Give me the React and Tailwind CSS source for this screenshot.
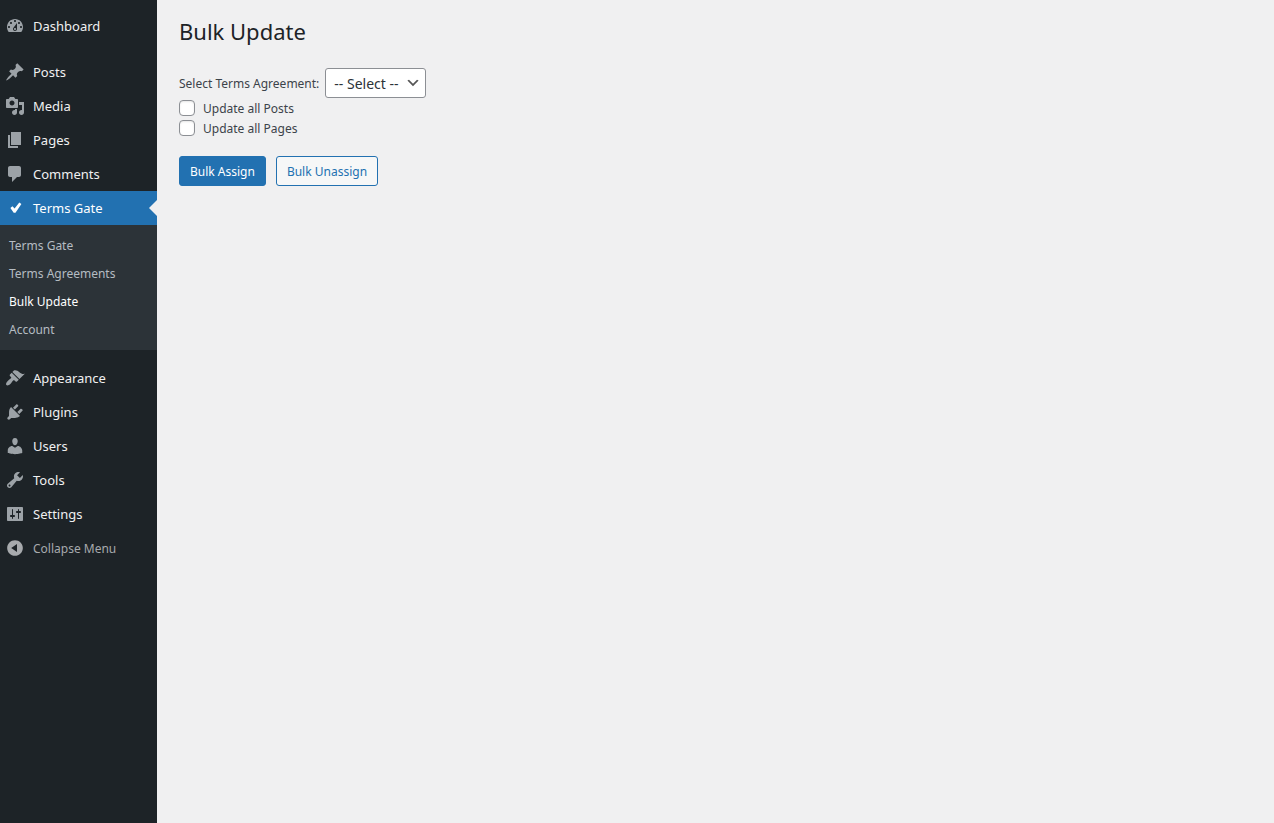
const icons = {
  dashboard:
    'M3.76 16h12.48c1.1-1.37 1.76-3.11 1.76-5 0-4.42-3.58-8-8-8s-8 3.58-8 8c0 1.89.66 3.63 1.76 5zM10 4c.55 0 1 .45 1 1s-.45 1-1 1-1-.45-1-1 .45-1 1-1zM6 6c.55 0 1 .45 1 1s-.45 1-1 1-1-.45-1-1 .45-1 1-1zm8 0c.55 0 1 .45 1 1s-.45 1-1 1-1-.45-1-1 .45-1 1-1zm-5.37 5.55L12 7v6c0 1.1-.9 2-2 2s-2-.9-2-2c0-.57.24-1.08.63-1.45zM4 10c.55 0 1 .45 1 1s-.45 1-1 1-1-.45-1-1 .45-1 1-1zm12 0c.55 0 1 .45 1 1s-.45 1-1 1-1-.45-1-1 .45-1 1-1zm-5 3c0-.55-.45-1-1-1s-1 .45-1 1 .45 1 1 1 1-.45 1-1z',
  posts:
    'M10.44 3.02l1.82-1.82 6.36 6.35-1.83 1.82c-1.05-.68-2.48-.57-3.41.36l-.75.75c-.92.93-1.04 2.35-.35 3.41l-1.83 1.82-2.41-2.41-2.8 2.79c-.42.42-3.38 2.71-3.8 2.29s1.86-3.39 2.28-3.81l2.79-2.79L4.1 9.36l1.83-1.82c1.05.69 2.48.57 3.4-.36l.75-.75c.93-.92 1.05-2.35.36-3.41z',
  media:
    'M13 11V4c0-.55-.45-1-1-1h-1.67L9 1H5L3.67 3H2c-.55 0-1 .45-1 1v7c0 .55.45 1 1 1h10c.55 0 1-.45 1-1zM7 4.5c1.38 0 2.5 1.12 2.5 2.5S8.38 9.5 7 9.5 4.5 8.38 4.5 7 5.62 4.5 7 4.5zM14 6h5v10.5c0 1.38-1.12 2.5-2.5 2.5S14 17.88 14 16.5s1.12-2.5 2.5-2.5c.17 0 .34.02.5.05V9h-3V6zm-4 8.05V13h2v3.5c0 1.38-1.12 2.5-2.5 2.5S7 17.88 7 16.5 8.12 14 9.5 14c.17 0 .34.02.5.05z',
  pages: 'M6 15V2h10v13H6zm-1 1h8v2H3V5h2v11z',
  comments:
    'M5 2h9c1.1 0 2 .9 2 2v7c0 1.1-.9 2-2 2h-2l-5 5v-5H5c-1.1 0-2-.9-2-2V4c0-1.1.9-2 2-2z',
  check: 'M14.3 4.6l2.1 1.5-5.9 8.7H8.7L5.4 10l2-1.8 2.2 2.3z',
  appearance:
    'M14.48 11.06L7.41 3.99l1.5-1.5c.5-.56 2.3-.47 3.51.32 1.21.8 1.43 1.28 2.91 2.1 1.18.64 2.45 1.26 4.45.85zm-.71.71L6.7 4.7 4.93 6.47c-.39.39-.39 1.02 0 1.41l1.06 1.06c.39.39.39 1.03 0 1.42-.6.6-1.43 1.11-2.21 1.69-.35.26-.7.53-1.01.84C1.43 14.23.4 16.08 1.4 17.07c.99 1 2.84-.03 4.18-1.36.31-.31.58-.66.85-1.02.57-.78 1.08-1.61 1.69-2.21.39-.39 1.02-.39 1.41 0l1.06 1.06c.39.39 1.02.39 1.41 0z',
  plugins:
    'M13.11 4.36L9.87 7.6 8 5.73l3.24-3.24c.35-.34 1.05-.2 1.56.32.52.51.66 1.21.31 1.55zm-8 1.77l.91-1.12 9.01 9.01-1.19.84c-.71.71-2.63 1.16-3.82 1.16H6.14L4.9 17.26c-.59.59-1.54.59-2.12 0-.59-.58-.59-1.53 0-2.12l1.24-1.24v-3.88c0-1.13.4-3.19 1.09-3.89zm7.26 3.97l3.24-3.24c.34-.35 1.04-.21 1.55.31.52.51.66 1.21.31 1.55l-3.24 3.25z',
  users:
    'M10 9.25c-2.27 0-2.73-3.44-2.73-3.44C7 4.02 7.82 2 9.97 2c2.16 0 2.98 2.02 2.71 3.81 0 0-.41 3.44-2.68 3.44zm0 2.57L12.72 10c2.39 0 4.52 2.33 4.52 4.53v2.49s-3.65 1.13-7.24 1.13c-3.65 0-7.24-1.13-7.24-1.13v-2.49c0-2.25 1.94-4.48 4.47-4.48z',
  tools:
    'M16.68 9.77c-1.34 1.34-3.3 1.67-4.95.99l-5.41 6.52c-.99.99-2.59.99-3.58 0s-.99-2.59 0-3.57l6.52-5.42c-.68-1.65-.35-3.61.99-4.95 1.28-1.28 3.12-1.62 4.72-1.06l-2.89 2.89 2.82 2.82 2.86-2.87c.53 1.58.18 3.39-1.08 4.65zM3.81 16.21c.4.39 1.04.39 1.43 0 .4-.4.4-1.04 0-1.43-.39-.4-1.03-.4-1.43 0-.39.39-.39 1.03 0 1.43z',
  settings:
    'M18 16V4c0-.55-.45-1-1-1H3c-.55 0-1 .45-1 1v12c0 .55.45 1 1 1h14c.55 0 1-.45 1-1zM8 11h1c.55 0 1 .45 1 1s-.45 1-1 1H8v1.5c0 .28-.22.5-.5.5s-.5-.22-.5-.5V13H6c-.55 0-1-.45-1-1s.45-1 1-1h1V5.5c0-.28.22-.5.5-.5s.5.22.5.5V11zm5-2h-1c-.55 0-1-.45-1-1s.45-1 1-1h1V5.5c0-.28.22-.5.5-.5s.5.22.5.5V7h1c.55 0 1 .45 1 1s-.45 1-1 1h-1v5.5c0 .28-.22.5-.5.5s-.5-.22-.5-.5V9z',
  collapse:
    'M10 2.16c4.33 0 7.84 3.51 7.84 7.84s-3.51 7.84-7.84 7.84S2.16 14.33 2.16 10 5.71 2.16 10 2.16zm2 11.72V6.12L6.18 9.97z',
};

function Icon({ name }) {
  return (
    <svg viewBox="0 0 20 20" className="size-5 shrink-0" fill="currentColor" fillRule="evenodd" aria-hidden="true">
      <path d={icons[name]} />
    </svg>
  );
}

function MenuItem({ icon, label }) {
  return (
    <li>
      <a href="#" className="flex h-[34px] items-center gap-2 pl-[5px] text-[#9ca2a7]">
        <Icon name={icon} />
        <span className="pt-0.5 text-[#f0f0f1]">{label}</span>
      </a>
    </li>
  );
}

const submenu = ['Terms Gate', 'Terms Agreements', 'Bulk Update', 'Account'];

function Sidebar() {
  return (
    <nav aria-label="Main menu" className="w-[157px] shrink-0 bg-[#1d2327] pt-[9px] text-[13px]">
      <ul>
        <MenuItem icon="dashboard" label="Dashboard" />
      </ul>
      <ul className="mt-3">
        <MenuItem icon="posts" label="Posts" />
        <MenuItem icon="media" label="Media" />
        <MenuItem icon="pages" label="Pages" />
        <MenuItem icon="comments" label="Comments" />
        <li>
          <a href="#" className="relative flex h-[34px] items-center gap-2 bg-[#2271b1] pl-[5px] text-white">
            <Icon name="check" />
            <span className="pt-0.5">Terms Gate</span>
            <span className="absolute top-1/2 right-0 -translate-y-1/2 border-8 border-l-0 border-transparent border-r-[#f0f0f1]" />
          </a>
          <ul className="bg-[#2c3338] pt-[7px] pb-1.5 text-[12px]">
            {submenu.map((label) => (
              <li key={label}>
                <a
                  href="#"
                  className={
                    label === 'Bulk Update'
                      ? 'flex h-7 items-center pl-[9px] text-white'
                      : 'flex h-7 items-center pl-[9px] text-[#b5bcc2]'
                  }
                >
                  {label}
                </a>
              </li>
            ))}
          </ul>
        </li>
      </ul>
      <ul className="mt-[11px]">
        <MenuItem icon="appearance" label="Appearance" />
        <MenuItem icon="plugins" label="Plugins" />
        <MenuItem icon="users" label="Users" />
        <MenuItem icon="tools" label="Tools" />
        <MenuItem icon="settings" label="Settings" />
      </ul>
      <button type="button" className="flex h-[34px] w-full items-center gap-2 pl-[5px] text-[12px] text-[#a7aaad]">
        <Icon name="collapse" />
        <span className="pt-0.5">Collapse Menu</span>
      </button>
    </nav>
  );
}

function Checkbox({ id, label }) {
  return (
    <div className="flex h-5 items-center gap-2">
      <input
        id={id}
        type="checkbox"
        className="size-4 appearance-none rounded-[4px] border border-[#8c8f94] bg-white shadow-[inset_0_1px_2px_rgba(0,0,0,0.1)]"
      />
      <label htmlFor={id} className="pt-0.5">
        {label}
      </label>
    </div>
  );
}

export default function App() {
  return (
    <div className="flex min-h-screen bg-[#f0f0f1] font-['Noto_Sans','Open_Sans',sans-serif] text-[12px] text-[#3c434a]">
      <Sidebar />
      <main className="grow px-[22px] pt-4">
        <h1 className="text-[22px] leading-[30px] text-[#1d2327]">Bulk Update</h1>
        <form className="mt-[22px]">
          <div className="flex items-center gap-1.5">
            <label htmlFor="agreement" className="pt-0.5">
              Select Terms Agreement:
            </label>
            <div className="relative">
              <select
                id="agreement"
                className="h-[30px] w-[101px] appearance-none rounded-[3px] border border-[#8c8f94] bg-white pl-2 text-[14px] text-[#2c3338]"
              >
                <option>-- Select --</option>
              </select>
              <svg
                viewBox="0 0 20 20"
                className="pointer-events-none absolute top-[7px] right-[5px] size-4"
                fill="#555"
                aria-hidden="true"
              >
                <path d="M5 6l5 5 5-5 2 1-7 7-7-7 2-1z" />
              </svg>
            </div>
          </div>
          <div>
            <Checkbox id="all-posts" label="Update all Posts" />
            <Checkbox id="all-pages" label="Update all Pages" />
          </div>
          <div className="mt-[18px] flex gap-[10px]">
            <button type="button" className="h-[30px] rounded-[3px] border border-[#2271b1] bg-[#2271b1] px-[10px] pt-0.5 text-white">
              Bulk Assign
            </button>
            <button type="button" className="h-[30px] rounded-[3px] border border-[#2271b1] bg-[#f6f7f7] px-[10px] pt-0.5 text-[#2271b1]">
              Bulk Unassign
            </button>
          </div>
        </form>
      </main>
    </div>
  );
}
